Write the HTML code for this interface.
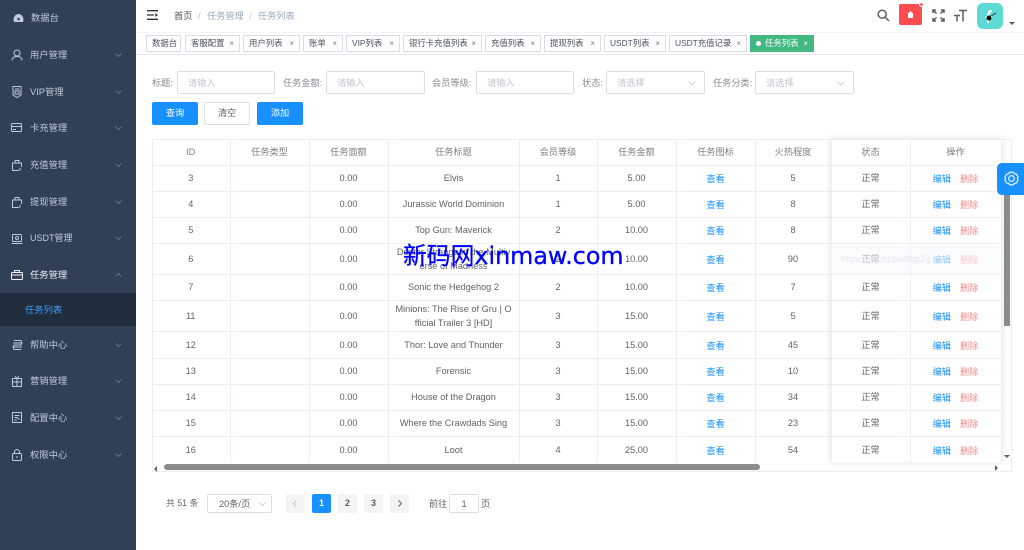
<!DOCTYPE html>
<html lang="zh"><head><meta charset="utf-8"><title>任务列表</title>
<style>
*{box-sizing:border-box}
html,body{margin:0;padding:0;width:1024px;height:550px;overflow:hidden;background:#fff}
body{font-family:"Liberation Sans","Noto Sans CJK SC",sans-serif;font-size:9.2px;color:#606266;position:relative;filter:blur(.3px)}
.a{position:absolute;white-space:nowrap}
#side{left:0;top:0;width:136px;height:550px;background:#304156}
.m{position:absolute;left:30px;color:#bfcbd9;font-size:9.3px;line-height:12px;white-space:nowrap}
.ic{position:absolute;left:10px}
.ch{position:absolute;left:115px}
svg{display:block;overflow:visible}
.tag{position:absolute;top:35px;height:17px;border:1px solid #d8dce5;background:#fff;color:#495060;font-size:8.4px;line-height:15px;padding-left:5px;white-space:nowrap}
.tag i{position:absolute;right:5px;top:0;font-style:normal;font-size:8px;color:#777}
.lb{position:absolute;top:77px;color:#8a8d93;font-size:9.2px;line-height:12px;white-space:nowrap}
.in{position:absolute;top:71px;height:23px;border:1px solid #dcdfe6;border-radius:2px;background:#fff;color:#c0c4cc;font-size:9.2px;line-height:22px;padding-left:10px}
.btn{position:absolute;top:102px;height:23px;width:46px;border-radius:2px;text-align:center;line-height:23px;font-size:9.2px;background:#1890ff;color:#fff}
table{border-collapse:collapse;table-layout:fixed;position:absolute}
td,th{border-right:1px solid #ebeef5;border-bottom:1px solid #ebeef5;text-align:center;padding:1px 0 0;font-weight:400;font-size:9.2px;line-height:14.5px;color:#606266;overflow:hidden}
th{color:#7d8086}
.l{color:#1890ff;position:relative;top:1px}
td.l{position:static}
td.l span{position:relative;top:1px}
.d{color:#f78989;margin-left:9px;position:relative;top:1px}
.pg{position:absolute;top:494px;width:19px;height:19px;background:#f4f4f5;border-radius:2px;text-align:center;line-height:19px;font-weight:700;color:#606266;font-size:9px}
</style></head><body>

<div class="a" id="side">
<svg class="ic" style="left:13px;top:13px" width="11" height="10" viewBox="0 0 11 10"><path d="M1 9C-.5 5 2 1 5.500 1S11.500 5 10 9Z" fill="#bfcbd9"/><circle cx="5.500" cy="6" r="1.300" fill="#304156"/></svg>
<div class="m" style="top:12px;left:31px">数据台</div>

<svg class="ic" style="left:11px;top:49px" width="12" height="12" viewBox="0 0 12 12" fill="none" stroke="#bfcbd9"><circle cx="6" cy="4" r="3"/><path d="M1 11.500C1 8.500 3 7.500 6 7.500S11 8.500 11 11.500"/></svg>
<div class="m" style="top:49px">用户管理</div>
<svg class="ch" style="top:53px" width="7" height="4" viewBox="0 0 7 4" fill="none" stroke="#6f7f92" stroke-width=".8"><path d="M.5.500 3.500 3.500 6.500.500"/></svg>

<svg class="ic" style="left:12px;top:86px" width="10" height="12" viewBox="0 0 10 12" fill="none" stroke="#bfcbd9"><path d="M1 .5H9V9L5 11.500 1 9Z"/><path d="M3 3H7M3 5H7V8H3Z"/></svg>
<div class="m" style="top:86px">VIP管理</div>
<svg class="ch" style="top:90px" width="7" height="4" viewBox="0 0 7 4" fill="none" stroke="#6f7f92" stroke-width=".8"><path d="M.5.500 3.500 3.500 6.500.500"/></svg>

<svg class="ic" style="left:11px;top:123px" width="11" height="10" viewBox="0 0 11 10" fill="none" stroke="#bfcbd9"><rect x=".5" y=".5" width="10" height="8" rx="1"/><path d="M.5 3.500H10.500M2 6.500H5"/></svg>
<div class="m" style="top:122px">卡充管理</div>
<svg class="ch" style="top:126px" width="7" height="4" viewBox="0 0 7 4" fill="none" stroke="#6f7f92" stroke-width=".8"><path d="M.5.500 3.500 3.500 6.500.500"/></svg>

<svg class="ic" style="left:12px;top:159px" width="10" height="12" viewBox="0 0 10 12" fill="none" stroke="#bfcbd9"><path d="M7 11.500H.5V4H9.500V8M3 4V1.500H7V4M8 9V11.500"/></svg>
<div class="m" style="top:159px">充值管理</div>
<svg class="ch" style="top:163px" width="7" height="4" viewBox="0 0 7 4" fill="none" stroke="#6f7f92" stroke-width=".8"><path d="M.5.500 3.500 3.500 6.500.500"/></svg>

<svg class="ic" style="left:12px;top:196px" width="10" height="12" viewBox="0 0 10 12" fill="none" stroke="#bfcbd9"><path d="M7 11.500H.5V4H9.500V8M3 4V1.500H7V4M8 9V11.500"/></svg>
<div class="m" style="top:196px">提现管理</div>
<svg class="ch" style="top:200px" width="7" height="4" viewBox="0 0 7 4" fill="none" stroke="#6f7f92" stroke-width=".8"><path d="M.5.500 3.500 3.500 6.500.500"/></svg>

<svg class="ic" style="left:11px;top:234px" width="12" height="10" viewBox="0 0 12 10" fill="none" stroke="#bfcbd9"><rect x="1.500" y=".5" width="9" height="7" rx="1"/><circle cx="6" cy="4" r="1.500"/><path d="M.5 9.500H11.500"/></svg>
<div class="m" style="top:232px;font-size:9px">USDT管理</div>
<svg class="ch" style="top:236px" width="7" height="4" viewBox="0 0 7 4" fill="none" stroke="#6f7f92" stroke-width=".8"><path d="M.5.500 3.500 3.500 6.500.500"/></svg>

<svg class="ic" style="left:11px;top:270px" width="12" height="10" viewBox="0 0 12 10" fill="none" stroke="#f0f3f6"><rect x=".5" y="2.500" width="11" height="7" rx="1"/><path d="M3.500 2.500V.5H8.500V2.500M.5 5H11.500"/></svg>
<div class="m" style="top:269px;color:#f0f3f6">任务管理</div>
<svg class="ch" style="top:273px" width="7" height="4" viewBox="0 0 7 4" fill="none" stroke="#6f7f92" stroke-width=".8"><path d="M.5 3.500 3.500.5 6.500 3.500"/></svg>

<div class="a" style="left:0;top:293px;width:136px;height:33px;background:#1f2d3d"></div>
<div class="m" style="top:304px;left:25px;color:#409eff">任务列表</div>

<svg class="ic" style="left:12px;top:339px" width="11" height="12" viewBox="0 0 11 12" fill="none" stroke="#bfcbd9"><path d="M2 1.500H9L10 4 9 6H2L1 8 2 10.500H9M1 4H10M1 8H10"/></svg>
<div class="m" style="top:339px">帮助中心</div>
<svg class="ch" style="top:343px" width="7" height="4" viewBox="0 0 7 4" fill="none" stroke="#6f7f92" stroke-width=".8"><path d="M.5.500 3.500 3.500 6.500.500"/></svg>

<svg class="ic" style="left:12px;top:375px" width="10" height="12" viewBox="0 0 10 12" fill="none" stroke="#bfcbd9"><path d="M.5 3.500H9.500V11.500H.5ZM.5 7H9.500M5 3.500V11.500M3 1 5 3.500 7 1"/></svg>
<div class="m" style="top:375px">营销管理</div>
<svg class="ch" style="top:379px" width="7" height="4" viewBox="0 0 7 4" fill="none" stroke="#6f7f92" stroke-width=".8"><path d="M.5.500 3.500 3.500 6.500.500"/></svg>

<svg class="ic" style="left:12px;top:412px" width="10" height="12" viewBox="0 0 10 12" fill="none" stroke="#bfcbd9"><rect x=".5" y=".5" width="9" height="10"/><path d="M2.500 3.500H7.500M2.500 5.500H5L7.500 7.500M2.500 8H5"/></svg>
<div class="m" style="top:412px">配置中心</div>
<svg class="ch" style="top:416px" width="7" height="4" viewBox="0 0 7 4" fill="none" stroke="#6f7f92" stroke-width=".8"><path d="M.5.500 3.500 3.500 6.500.500"/></svg>

<svg class="ic" style="left:12px;top:449px" width="10" height="12" viewBox="0 0 10 12" fill="none" stroke="#bfcbd9"><rect x=".5" y="4.500" width="9" height="7" rx="1"/><path d="M2.500 4.500V3A2.500 2.500 0 0 1 7.500 3V4.500M5 7V9"/></svg>
<div class="m" style="top:449px">权限中心</div>
<svg class="ch" style="top:453px" width="7" height="4" viewBox="0 0 7 4" fill="none" stroke="#6f7f92" stroke-width=".8"><path d="M.5.500 3.500 3.500 6.500.500"/></svg>
</div>

<!-- top bar -->
<svg class="a" style="left:147px;top:10px" width="11" height="10" viewBox="0 0 11 10" fill="none" stroke="#303133" stroke-width="1.300"><path d="M0 .7H11M0 5H7M0 9.300H11"/><path d="M8.300 3 11 5 8.300 7Z" fill="#303133" stroke="none"/></svg>
<div class="a" style="left:174px;top:10px;color:#50535a;line-height:12px">首页</div>
<div class="a" style="left:198px;top:10px;color:#c0c4cc;line-height:12px">/</div>
<div class="a" style="left:207px;top:10px;color:#97a8be;line-height:12px">任务管理</div>
<div class="a" style="left:249px;top:10px;color:#c0c4cc;line-height:12px">/</div>
<div class="a" style="left:258px;top:10px;color:#97a8be;line-height:12px">任务列表</div>

<svg class="a" style="left:877px;top:9px" width="13" height="13" viewBox="0 0 13 13" fill="none" stroke="#5a5e66" stroke-width="1.500"><circle cx="5.200" cy="5.200" r="4"/><path d="M8.200 8.200 12 12"/></svg>
<div class="a" style="left:899px;top:4px;width:23px;height:21px;background:#ff4d4f;border-radius:2px"></div>
<svg class="a" style="left:906px;top:10px" width="9" height="9" viewBox="0 0 9 9"><path d="M2 3.500 4.500 1 7 3.500V8H2Z" fill="#fff"/></svg>
<div class="a" style="left:919px;top:2px;width:5px;height:5px;border-radius:50%;background:#f56c6c;border:1px solid #fff"></div>
<svg class="a" style="left:932px;top:9px" width="13" height="13" viewBox="0 0 13 13" fill="none" stroke="#5a5e66" stroke-width="1.500"><path d="M1 4V1H4M1 1 4.500 4.500M9 1H12V4M12 1 8.500 4.500M1 9V12H4M1 12 4.500 8.500M12 9V12H9M12 12 8.500 8.500"/></svg>
<svg class="a" style="left:954px;top:9px" width="13" height="13" viewBox="0 0 13 13" fill="none" stroke="#5a5e66" stroke-width="1.500"><path d="M5 1.500H13M9 1.500V12.500M0 6.500H6M3 6.500V12.500"/></svg>
<div class="a" style="left:977px;top:3px;width:26px;height:26px;border-radius:6px;background:#5fd9d5"></div>
<svg class="a" style="left:977px;top:3px" width="26" height="26" viewBox="0 0 26 26"><path d="M15 7C10 7 10 10 10 20H12C12 14 12 9 15 9Z" fill="#fff"/><path d="M8 13H15V15H8Z" fill="#fff"/><circle cx="12" cy="15" r="2.500" fill="#111"/><path d="M14 13 19 10" stroke="#222" stroke-width=".8"/></svg>
<div class="a" style="left:1009px;top:22px;border:3px solid transparent;border-top:3px solid #5a5e66;border-bottom:0"></div>

<!-- tags -->
<div class="a" style="left:136px;top:32px;width:888px;height:23px;background:#fff;border-top:1px solid #f3f4f6;border-bottom:1px solid #e5e8ef"></div>
<div class="tag" style="left:146px;width:35px">数据台</div>
<div class="tag" style="left:185px;width:55px">客服配置<i>×</i></div>
<div class="tag" style="left:243px;width:57px">用户列表<i>×</i></div>
<div class="tag" style="left:303px;width:40px">账单<i>×</i></div>
<div class="tag" style="left:346px;width:54px">VIP列表<i>×</i></div>
<div class="tag" style="left:403px;width:79px">银行卡充值列表<i>×</i></div>
<div class="tag" style="left:485px;width:56px">充值列表<i>×</i></div>
<div class="tag" style="left:544px;width:57px">提现列表<i>×</i></div>
<div class="tag" style="left:604px;width:62px">USDT列表<i>×</i></div>
<div class="tag" style="left:669px;width:78px">USDT充值记录<i>×</i></div>
<div class="tag" style="left:750px;width:64px;background:#42b983;border-color:#42b983;color:#fff;padding-left:14px"><span class="a" style="left:5px;top:5px;width:5px;height:5px;border-radius:50%;background:#fff"></span>任务列表<i style="color:#fff">×</i></div>

<!-- filter -->
<div class="lb" style="left:152px">标题:</div>
<div class="in" style="left:177px;width:98px">请输入</div>
<div class="lb" style="left:283px">任务金额:</div>
<div class="in" style="left:326px;width:99px">请输入</div>
<div class="lb" style="left:432px">会员等级:</div>
<div class="in" style="left:476px;width:98px">请输入</div>
<div class="lb" style="left:582px">状态:</div>
<div class="in" style="left:606px;width:99px">请选择<svg class="a" style="right:8px;top:9px" width="8" height="5" viewBox="0 0 8 5" fill="none" stroke="#c0c4cc" stroke-width=".8"><path d="M.5.500 4 4 7.500.500"/></svg></div>
<div class="lb" style="left:713px">任务分类:</div>
<div class="in" style="left:755px;width:99px">请选择<svg class="a" style="right:8px;top:9px" width="8" height="5" viewBox="0 0 8 5" fill="none" stroke="#c0c4cc" stroke-width=".8"><path d="M.5.500 4 4 7.500.500"/></svg></div>
<div class="btn" style="left:152px">查询</div>
<div class="btn" style="left:204px;background:#fff;color:#606266;border:1px solid #dcdfe6;line-height:21px">清空</div>
<div class="btn" style="left:257px">添加</div>

<!-- table frame -->
<div class="a" style="left:152px;top:139px;width:860px;height:333px;border:1px solid #ebeef5"></div>

<table style="left:152px;top:139px;width:849px">
<colgroup><col style="width:78px"><col style="width:79px"><col style="width:79px"><col style="width:131px"><col style="width:78px"><col style="width:79px"><col style="width:79px"><col style="width:76px"><col style="width:79px"><col style="width:91px"></colgroup>
<tr style="height:26px"><th>ID</th><th>任务类型</th><th>任务面额</th><th>任务标题</th><th>会员等级</th><th>任务金额</th><th>任务图标</th><th>火热程度</th><th>状态</th><th>操作</th></tr>
<tr style="height:26px"><td>3</td><td></td><td>0.00</td><td>Elvis</td><td>1</td><td>5.00</td><td class="l"><span>查看</span></td><td>5</td><td>正常</td><td><span class="l">编辑</span><span class="d">删除</span></td></tr>
<tr style="height:26px"><td>4</td><td></td><td>0.00</td><td>Jurassic World Dominion</td><td>1</td><td>5.00</td><td class="l"><span>查看</span></td><td>8</td><td>正常</td><td><span class="l">编辑</span><span class="d">删除</span></td></tr>
<tr style="height:26px"><td>5</td><td></td><td>0.00</td><td>Top Gun: Maverick</td><td>2</td><td>10.00</td><td class="l"><span>查看</span></td><td>8</td><td>正常</td><td><span class="l">编辑</span><span class="d">删除</span></td></tr>
<tr style="height:31px"><td>6</td><td></td><td>0.00</td><td>Doctor Strange in the Multiv<br>erse of Madness</td><td>2</td><td>10.00</td><td class="l"><span>查看</span></td><td>90</td><td>正常</td><td><span class="l">编辑</span><span class="d">删除</span></td></tr>
<tr style="height:26px"><td>7</td><td></td><td>0.00</td><td>Sonic the Hedgehog 2</td><td>2</td><td>10.00</td><td class="l"><span>查看</span></td><td>7</td><td>正常</td><td><span class="l">编辑</span><span class="d">删除</span></td></tr>
<tr style="height:31px"><td>11</td><td></td><td>0.00</td><td>Minions: The Rise of Gru | O<br>fficial Trailer 3 [HD]</td><td>3</td><td>15.00</td><td class="l"><span>查看</span></td><td>5</td><td>正常</td><td><span class="l">编辑</span><span class="d">删除</span></td></tr>
<tr style="height:27px"><td>12</td><td></td><td>0.00</td><td>Thor: Love and Thunder</td><td>3</td><td>15.00</td><td class="l"><span>查看</span></td><td>45</td><td>正常</td><td><span class="l">编辑</span><span class="d">删除</span></td></tr>
<tr style="height:26px"><td>13</td><td></td><td>0.00</td><td>Forensic</td><td>3</td><td>15.00</td><td class="l"><span>查看</span></td><td>10</td><td>正常</td><td><span class="l">编辑</span><span class="d">删除</span></td></tr>
<tr style="height:26px"><td>14</td><td></td><td>0.00</td><td>House of the Dragon</td><td>3</td><td>15.00</td><td class="l"><span>查看</span></td><td>34</td><td>正常</td><td><span class="l">编辑</span><span class="d">删除</span></td></tr>
<tr style="height:26px"><td>15</td><td></td><td>0.00</td><td>Where the Crawdads Sing</td><td>3</td><td>15.00</td><td class="l"><span>查看</span></td><td>23</td><td>正常</td><td><span class="l">编辑</span><span class="d">删除</span></td></tr>
<tr style="height:26px"><td style="border-bottom:0">16</td><td style="border-bottom:0"></td><td style="border-bottom:0">0.00</td><td style="border-bottom:0">Loot</td><td style="border-bottom:0">4</td><td style="border-bottom:0">25.00</td><td class="l" style="border-bottom:0"><span>查看</span></td><td style="border-bottom:0">54</td><td style="border-bottom:0">正常</td><td style="border-bottom:0"><span class="l">编辑</span><span class="d">删除</span></td></tr>
</table>

<!-- fixed column shadow + ghost row -->
<div class="a" style="left:831px;top:139px;width:171px;height:323px;box-shadow:0 0 8px rgba(0,0,0,.12);pointer-events:none"></div>
<div class="a" style="left:831px;top:244px;width:170px;height:30px;background:rgba(245,247,250,.55);color:#e4e6ea;font-size:9px;line-height:30px;padding-left:10px;overflow:hidden">https://youtu.be/8bpZg</div>

<!-- scrollbars -->
<div class="a" style="left:154px;top:466px;border:3px solid transparent;border-right:3px solid #606060;border-left:0"></div>
<div class="a" style="left:164px;top:464px;width:596px;height:6px;border-radius:3px;background:#8c8c8c"></div>
<div class="a" style="left:995px;top:465px;border:3px solid transparent;border-left:3px solid #606060;border-right:0"></div>
<div class="a" style="left:1004px;top:195px;width:6px;height:131px;background:#8c8c8c"></div>
<div class="a" style="left:1004px;top:455px;border:3px solid transparent;border-top:3px solid #606060;border-bottom:0"></div>

<!-- gear tab -->
<div class="a" style="left:997px;top:163px;width:27px;height:32px;background:#1890ff;border-radius:5px 0 0 5px"></div>
<svg class="a" style="left:1004px;top:171px" width="15" height="15" viewBox="0 0 15 15" fill="none" stroke="#fff" stroke-width="1.100"><path d="M5.500 1.200H9.500L10.300 2.800 12.200 2.900 14.200 6 13.200 7.500 14.200 9 12.200 12.100 10.300 12.200 9.500 13.800H5.500L4.700 12.200 2.800 12.100 .8 9 1.800 7.500 .8 6 2.800 2.900 4.700 2.800Z" stroke-linejoin="round"/><circle cx="7.500" cy="7.500" r="2.800"/></svg>

<!-- pagination -->
<div class="a" style="left:166px;top:497px;line-height:12px;font-size:8.800px">共 51 条</div>
<div class="in" style="left:207px;top:494px;width:65px;height:19px;line-height:18px;color:#606266;padding-left:11px">20条/页<svg class="a" style="right:5px;top:7px" width="7" height="4" viewBox="0 0 7 4" fill="none" stroke="#c0c4cc" stroke-width=".8"><path d="M.5.500 3.500 3.500 6.500.500"/></svg></div>
<div class="pg" style="left:286px;color:#c0c4cc"><svg style="margin:6px 0 0 7px" width="4" height="7" viewBox="0 0 4 7" fill="none" stroke="#c0c4cc"><path d="M3.500.5.500 3.500 3.500 6.500"/></svg></div>
<div class="pg" style="left:312px;background:#1890ff;color:#fff">1</div>
<div class="pg" style="left:338px">2</div>
<div class="pg" style="left:364px">3</div>
<div class="pg" style="left:390px"><svg style="margin:6px 0 0 8px" width="4" height="7" viewBox="0 0 4 7" fill="none" stroke="#606266"><path d="M.5.500 3.500 3.500.5 6.500"/></svg></div>
<div class="a" style="left:429px;top:498px;line-height:12px">前往</div>
<div class="in" style="left:449px;top:494px;width:30px;height:19px;line-height:18px;color:#606266;padding:0;text-align:center">1</div>
<div class="a" style="left:481px;top:498px;line-height:12px">页</div>

<!-- watermark -->
<div class="a" style="left:403px;top:242px;color:#0000ff;font-family:'DejaVu Sans','Noto Sans CJK SC',sans-serif;font-size:23.800px;line-height:28px;-webkit-text-stroke:.3px #0000ff">新码网xinmaw.com</div>
</body></html>
